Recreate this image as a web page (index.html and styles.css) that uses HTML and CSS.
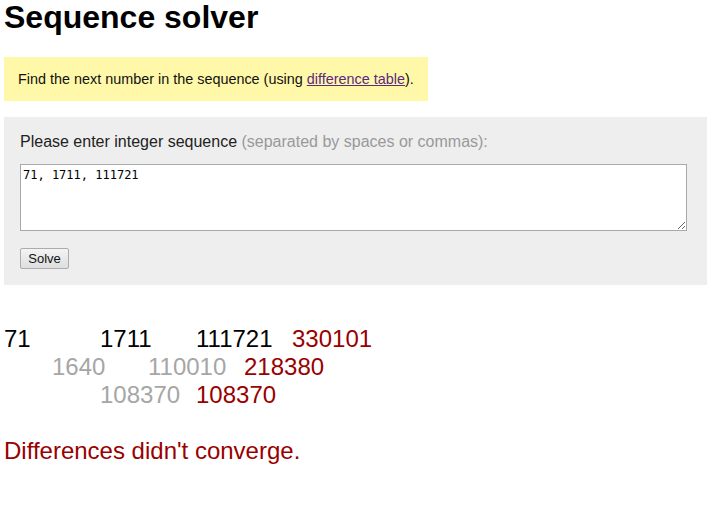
FILE: index.html
```html
<!DOCTYPE html>
<html>
<head>
<meta charset="utf-8">
<title>Sequence solver</title>
<link rel="stylesheet" href="styles.css">
</head>
<body>
<h1 class="title">Sequence solver</h1>
<div class="note">Find the next number in the sequence (using <a href="#" class="link">difference table</a>).</div>
<form class="panel">
  <div class="label">Please enter integer sequence <span class="hint">(separated by spaces or commas):</span></div>
  <textarea class="input">71, 1711, 111721</textarea>
  <div><button type="button" class="btn">Solve</button></div>
</form>
<div class="diff">
  <span class="n r1 c1">71</span>
  <span class="n r1 c3">1711</span>
  <span class="n r1 c5">111721</span>
  <span class="n r1 c7 new">330101</span>
  <span class="n r2 c2 d">1640</span>
  <span class="n r2 c4 d">110010</span>
  <span class="n r2 c6 new">218380</span>
  <span class="n r3 c3 d">108370</span>
  <span class="n r3 c5 new">108370</span>
</div>
<p class="msg">Differences didn't converge.</p>
</body>
</html>
```
FILE: styles.css
```css
html, body { background: #fff; }
body {
  margin: 0;
  padding: 0 6px 0 4px;
  font-family: "Liberation Sans", Arial, sans-serif;
  color: #000;
}
.title {
  margin: 0;
  font-size: 32px;
  line-height: 34px;
  font-weight: bold;
}
.note {
  margin-top: 23px;
  width: fit-content;
  background: #fff8a8;
  padding: 14px 14px 14px 14px;
  font-size: 14.4px;
  line-height: 16px;
  color: #111;
}
.link { color: #5a2a82; }
.panel {
  margin: 16px 0 0 0;
  background: #eeeeee;
  padding: 16px 16px 16px 16px;
}
.label {
  font-size: 16px;
  line-height: 18px;
  color: #222;
}
.hint { color: #999; }
.input {
  display: block;
  box-sizing: border-box;
  margin-top: 13px;
  width: 667px;
  height: 67px;
  border: 1px solid #a9a9a9;
  padding: 3px 2px;
  font-family: "DejaVu Sans Mono", "Liberation Mono", monospace;
  font-size: 12px;
  line-height: 14px;
  color: #000;
  background: #fff;
}
.btn {
  margin-top: 17px;
  box-sizing: border-box;
  width: 49px;
  height: 21px;
  padding: 0;
  font-family: "Liberation Sans", Arial, sans-serif;
  font-size: 13px;
  color: #111;
  background: linear-gradient(#f4f4f4, #dedede);
  border: 1px solid #acacac;
  border-radius: 2px;
}
.diff {
  margin-top: 40px;
  display: grid;
  grid-template-columns: repeat(9, 48px);
  grid-auto-rows: 28px;
  font-size: 24px;
  line-height: 28px;
}
.n { white-space: nowrap; }
.r1 { grid-row: 1; }
.r2 { grid-row: 2; }
.r3 { grid-row: 3; }
.c1 { grid-column: 1 / span 2; }
.c2 { grid-column: 2 / span 2; }
.c3 { grid-column: 3 / span 2; }
.c4 { grid-column: 4 / span 2; }
.c5 { grid-column: 5 / span 2; }
.c6 { grid-column: 6 / span 2; }
.c7 { grid-column: 7 / span 2; }
.d { color: #a6a6a6; }
.new { color: #990000; }
.msg {
  margin: 28px 0 0 0;
  font-size: 24px;
  line-height: 28px;
  color: #990000;
}
```
